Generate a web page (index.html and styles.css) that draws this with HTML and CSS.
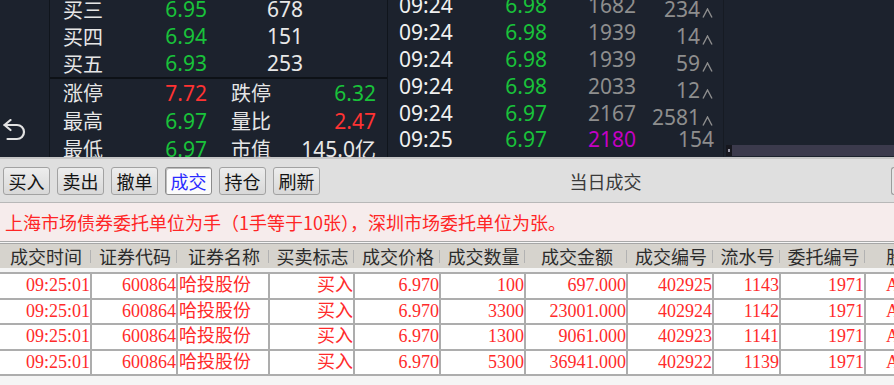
FILE: index.html
```html
<!DOCTYPE html>
<html lang="zh-CN">
<head>
<meta charset="utf-8">
<title>当日成交</title>
<link rel="stylesheet" href="styles.css">
</head>
<body>
<div class="app">
  <div class="top">
    <div class="side">
      <svg class="back" viewBox="0 0 24 22" width="24" height="22">
        <polyline points="7.5,1 1.5,6 7.5,11" fill="none" stroke="#e2e2e2" stroke-width="2.2" stroke-linejoin="round" stroke-linecap="round"/>
        <path d="M1.5 6 H14 A7 7 0 0 1 14 20 H4.5" fill="none" stroke="#e2e2e2" stroke-width="2.2" stroke-linecap="round"/>
      </svg>
    </div>
    <div class="quote">
      <div class="book">
        <div class="qrow"><span class="lbl">买三</span><span class="num green">6.95</span><span class="num white">678</span></div>
        <div class="qrow"><span class="lbl">买四</span><span class="num green">6.94</span><span class="num white">151</span></div>
        <div class="qrow"><span class="lbl">买五</span><span class="num green">6.93</span><span class="num white">253</span></div>
      </div>
      <div class="qsep"></div>
      <div class="stats">
        <div class="qrow2"><span class="lbl">涨停</span><span class="num red">7.72</span><span class="lbl lbl2">跌停</span><span class="num green">6.32</span></div>
        <div class="qrow2"><span class="lbl">最高</span><span class="num green">6.97</span><span class="lbl lbl2">量比</span><span class="num red">2.47</span></div>
        <div class="qrow2"><span class="lbl">最低</span><span class="num green">6.97</span><span class="lbl lbl2">市值</span><span class="num white">145.0亿</span></div>
      </div>
    </div>
    <div class="ticks">
      <div class="tlist">
        <div class="trow"><span class="t">09:24</span><span class="p">6.98</span><span class="v">1682</span><span class="c up">234<svg class="caret" viewBox="0 0 11 10" width="11" height="10"><polyline points="1,9.5 5.5,1 10,9.5" fill="none" stroke="#8e8e8e" stroke-width="1.4"/></svg></span></div>
        <div class="trow"><span class="t">09:24</span><span class="p">6.98</span><span class="v">1939</span><span class="c up">14<svg class="caret" viewBox="0 0 11 10" width="11" height="10"><polyline points="1,9.5 5.5,1 10,9.5" fill="none" stroke="#8e8e8e" stroke-width="1.4"/></svg></span></div>
        <div class="trow"><span class="t">09:24</span><span class="p">6.98</span><span class="v">1939</span><span class="c up">59<svg class="caret" viewBox="0 0 11 10" width="11" height="10"><polyline points="1,9.5 5.5,1 10,9.5" fill="none" stroke="#8e8e8e" stroke-width="1.4"/></svg></span></div>
        <div class="trow"><span class="t">09:24</span><span class="p">6.98</span><span class="v">2033</span><span class="c up">12<svg class="caret" viewBox="0 0 11 10" width="11" height="10"><polyline points="1,9.5 5.5,1 10,9.5" fill="none" stroke="#8e8e8e" stroke-width="1.4"/></svg></span></div>
        <div class="trow"><span class="t">09:24</span><span class="p">6.97</span><span class="v">2167</span><span class="c up">2581<svg class="caret" viewBox="0 0 11 10" width="11" height="10"><polyline points="1,9.5 5.5,1 10,9.5" fill="none" stroke="#8e8e8e" stroke-width="1.4"/></svg></span></div>
        <div class="trow"><span class="t">09:25</span><span class="p">6.97</span><span class="v magenta">2180</span><span class="c">154</span></div>
      </div>
    </div>
    <div class="extra">
      <div class="hscroll"><span class="hthumb"><i class="dot"></i></span></div>
    </div>
  </div>

  <div class="toolbar">
    <div class="btn">买入</div>
    <div class="btn">卖出</div>
    <div class="btn">撤单</div>
    <div class="btn on">成交</div>
    <div class="btn">持仓</div>
    <div class="btn">刷新</div>
    <div class="title">当日成交</div>
    <div class="edge"></div>
  </div>

  <div class="notice">上海市场债券委托单位为手（1手等于10张），深圳市场委托单位为张。</div>

  <div class="table">
    <div class="thead">
      <div class="th">成交时间</div>
      <div class="th">证券代码</div>
      <div class="th">证券名称</div>
      <div class="th">买卖标志</div>
      <div class="th">成交价格</div>
      <div class="th">成交数量</div>
      <div class="th">成交金额</div>
      <div class="th">成交编号</div>
      <div class="th">流水号</div>
      <div class="th">委托编号</div>
      <div class="th th-last">股东代码</div>
    </div>
    <div class="tbody">
      <div class="tr">
        <div class="td">09:25:01</div><div class="td">600864</div><div class="td td-l">哈投股份</div><div class="td">买入</div><div class="td">6.970</div><div class="td">100</div><div class="td">697.000</div><div class="td">402925</div><div class="td">1143</div><div class="td">1971</div><div class="td td-last">A</div>
      </div>
      <div class="tr">
        <div class="td">09:25:01</div><div class="td">600864</div><div class="td td-l">哈投股份</div><div class="td">买入</div><div class="td">6.970</div><div class="td">3300</div><div class="td">23001.000</div><div class="td">402924</div><div class="td">1142</div><div class="td">1971</div><div class="td td-last">A</div>
      </div>
      <div class="tr">
        <div class="td">09:25:01</div><div class="td">600864</div><div class="td td-l">哈投股份</div><div class="td">买入</div><div class="td">6.970</div><div class="td">1300</div><div class="td">9061.000</div><div class="td">402923</div><div class="td">1141</div><div class="td">1971</div><div class="td td-last">A</div>
      </div>
      <div class="tr">
        <div class="td">09:25:01</div><div class="td">600864</div><div class="td td-l">哈投股份</div><div class="td">买入</div><div class="td">6.970</div><div class="td">5300</div><div class="td">36941.000</div><div class="td">402922</div><div class="td">1139</div><div class="td">1971</div><div class="td td-last">A</div>
      </div>
    </div>
  </div>
</div>
</body>
</html>
```

FILE: styles.css
```css
* { box-sizing: border-box; margin: 0; padding: 0; }
html, body { width: 894px; height: 385px; overflow: hidden; background: #f5f5f5; }
body { font-family: "Noto Sans CJK SC", sans-serif; }
.app { width: 894px; height: 385px; overflow: hidden; }

/* ---------- dark quote area ---------- */
.top { display: flex; height: 157px; background: #1c222d; overflow: hidden; }
.side { width: 50px; flex-shrink: 0; border-right: 1px solid #10151c; display: flex; flex-direction: column; justify-content: flex-end; padding-bottom: 16px; }
.back { display: block; margin-left: 3px; }

.quote { width: 338px; flex-shrink: 0; border-right: 1px solid #10151c; }
.book { margin-top: -4px; padding-left: 13px; }
.qrow { display: grid; grid-template-columns: 60px 84px 96px; height: 27px; align-items: center; }
.qsep { height: 2px; background: #0d1116; }
.stats { padding-left: 13px; }
.qrow2 { display: grid; grid-template-columns: 60px 84px 84px 85px; height: 28px; align-items: center; }
.lbl { font: 20px/1 "Noto Sans CJK SC", sans-serif; color: #e6e6e6; }
.lbl2 { padding-left: 24px; }
.num { font: 21px/1 "Noto Sans", "Noto Sans CJK SC", sans-serif; text-align: right; white-space: nowrap; }
.green { color: #19c23a; }
.red { color: #ff3333; }
.white { color: #e8e8e8; }

.ticks { width: 336px; flex-shrink: 0; border-right: 1px solid #161b23; padding-left: 11px; }
.tlist { margin-top: -9px; }
.trow { display: grid; grid-template-columns: 70px 78px 89px 78px; height: 27px; align-items: center; font: 21px/1 "Noto Sans", sans-serif; }
.t { color: #f0f0f0; }
.p { color: #19c23a; text-align: right; }
.v { color: #8e8e8e; text-align: right; }
.v.magenta { color: #c400c4; }
.c { color: #8e8e8e; display: flex; justify-content: flex-end; align-items: flex-end; }
.c.up { padding-top: 8px; }
.caret { margin: 0 1px 2px 2px; }

.extra { flex: 1; display: flex; flex-direction: column; justify-content: flex-end; padding-bottom: 1px; }
.hscroll { height: 11px; margin-left: 2px; background: #3b3a4c; display: flex; }
.hthumb { width: 6px; background: #16171e; display: flex; align-items: center; }
.dot { display: block; width: 2px; height: 3px; margin-left: 2px; background: #9a9aa8; }

/* ---------- toolbar ---------- */
.toolbar { display: flex; align-items: center; gap: 7px; height: 45px; padding-left: 3px; border-top: 2px solid #c6c6c6; background: #dfdfdf; }
.btn { width: 47px; height: 28px; flex-shrink: 0; display: flex; align-items: center; justify-content: center; border: 1px solid #a2a2a2; border-radius: 3px; background: linear-gradient(#ededed, #d8d8d8); font: 18px/1 "Noto Sans CJK SC", sans-serif; color: #141414; }
.btn.on { background: #fbfbfb; color: #2a2aff; border-color: #8c8c8c; box-shadow: inset 1px 1px 0 #bdbdbd; }
.title { flex: 1; text-align: center; font: 18px/1 "Noto Sans CJK SC", sans-serif; color: #3a3a3a; }
.edge { width: 3px; height: 28px; flex-shrink: 0; border: 1px solid #9c9c9c; border-right: none; border-radius: 3px 0 0 3px; background: #e6e6e6; }

/* ---------- notice ---------- */
.notice { height: 40px; display: flex; align-items: center; padding-left: 5px; border-top: 1px solid #b8b8b8; border-bottom: 1px solid #a8a8a8; background: #f6ecec; color: #ff2626; font: 18px/1 "Noto Sans CJK SC", sans-serif; white-space: nowrap; }

/* ---------- table ---------- */
.table { padding-top: 1px; }
.thead, .tr { display: grid; grid-template-columns: 92px 86px 92px 85px 86px 85px 102px 86px 67px 85px 1fr; }
.thead { height: 25px; border-top: 1px solid #a6a6a6; background: #d6d3cd; margin-bottom: 4px; }
.th { display: flex; align-items: center; justify-content: center; font: 18px/1 "Noto Sans CJK SC", sans-serif; color: #2c2c2c; white-space: nowrap; background: linear-gradient(#b2b2b2, #b2b2b2) right 1px center / 1px 13px no-repeat; }
.th-last { justify-content: flex-start; padding-left: 20px; background: none; overflow: hidden; }
.tbody { border-top: 2px solid #adadad; background: #ffffff; }
.tr { height: 25.5px; border-bottom: 2px solid #adadad; }
.td { border-right: 2px solid #adadad; text-align: right; color: #ff2b2b; font: 18px/23.5px "Liberation Serif", "Noto Sans CJK SC", serif; white-space: nowrap; overflow: hidden; }
.td-l { text-align: left; padding-left: 1px; }
.td-last { text-align: left; padding-left: 20px; border-right: none; }
```
